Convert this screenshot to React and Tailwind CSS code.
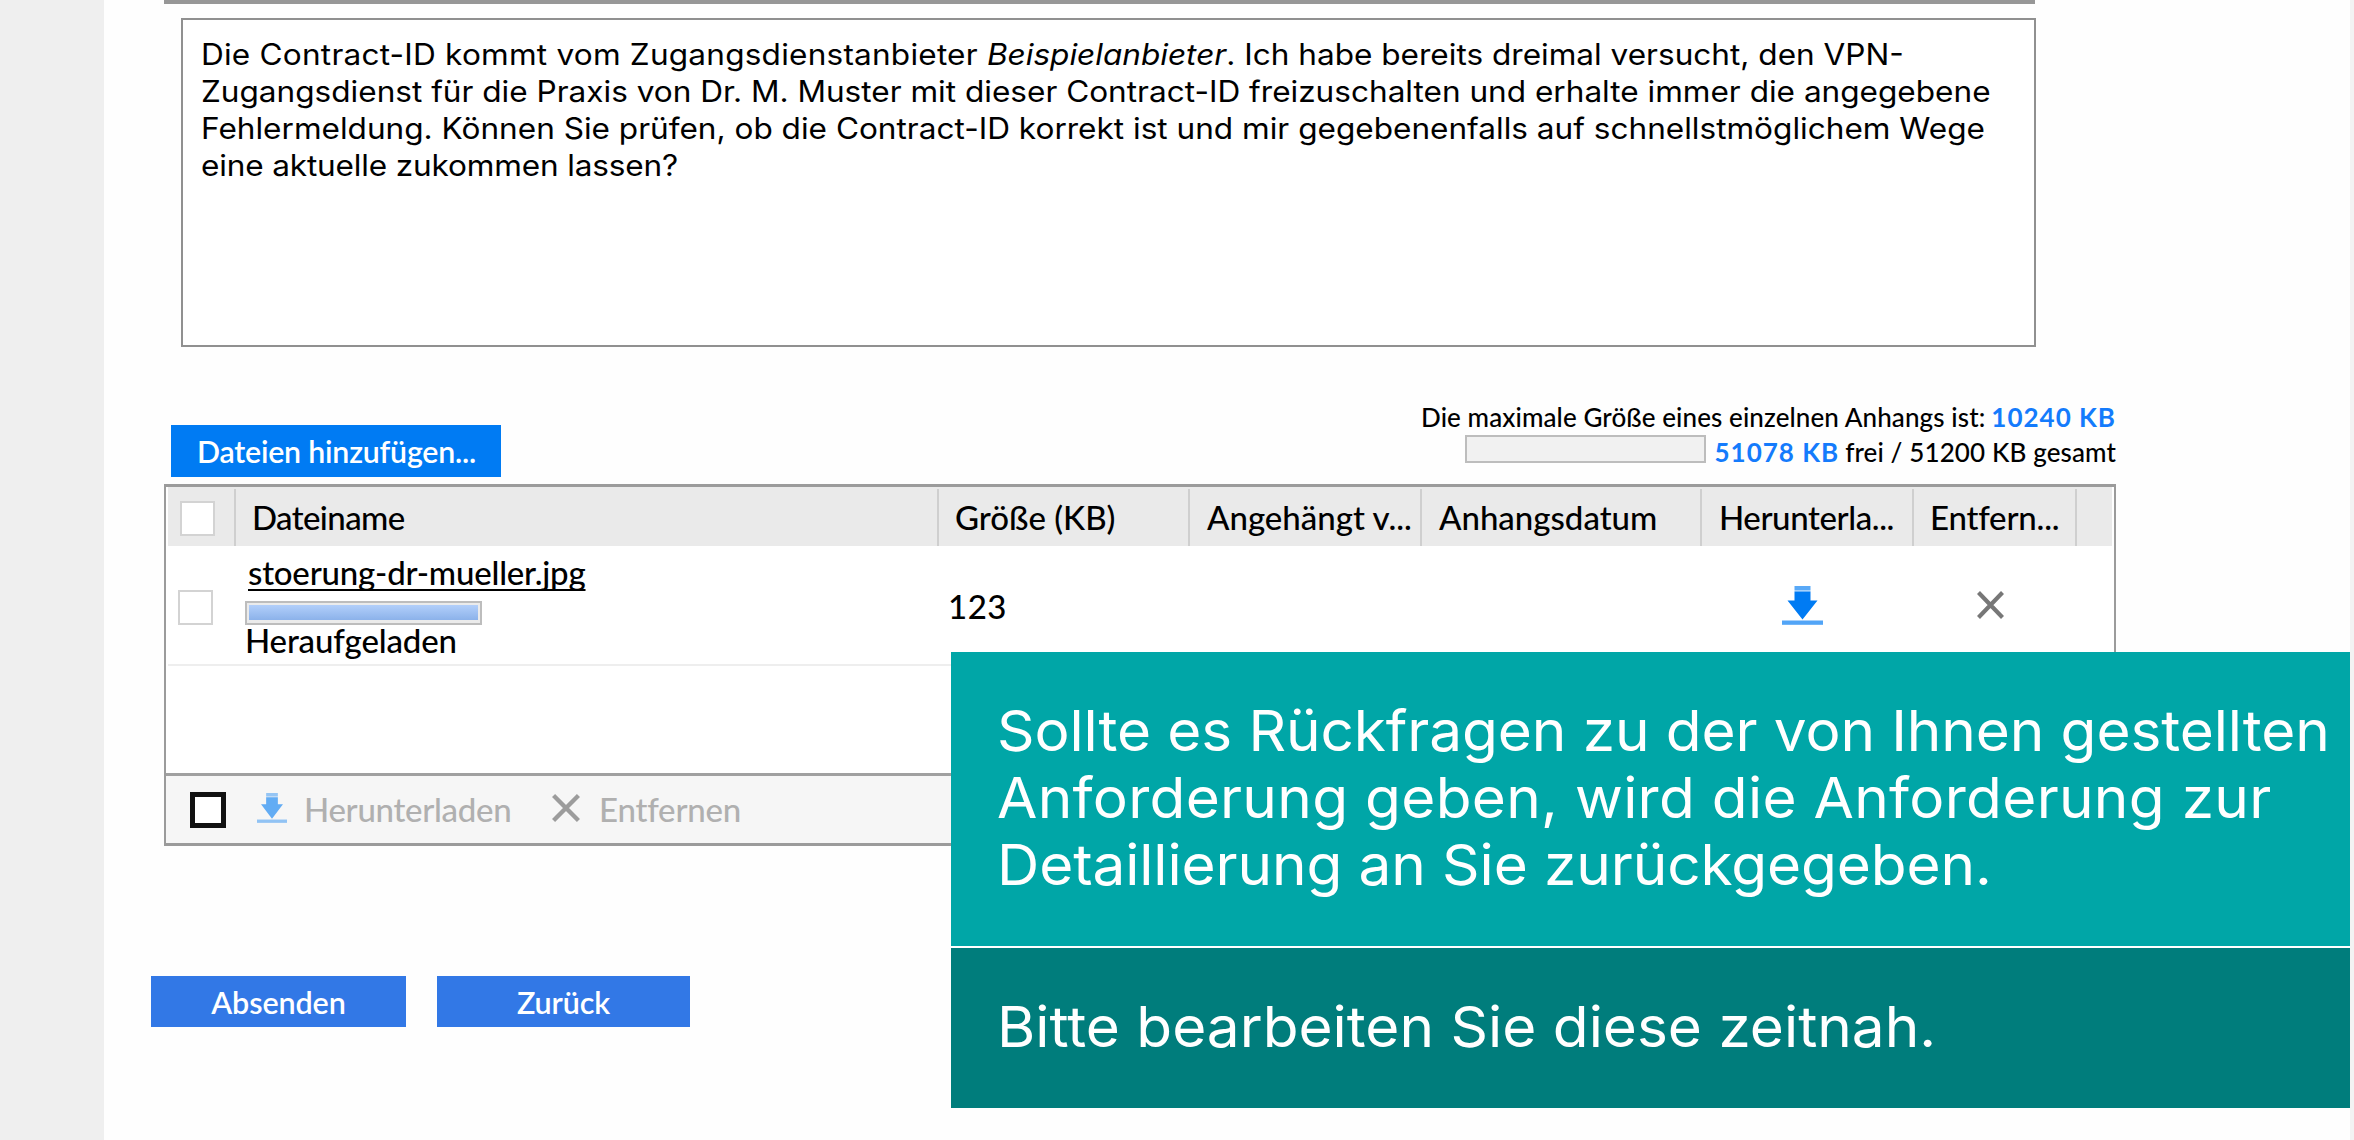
import React from "react";

const columns = [
  { label: "Dateiname", cls: "pl-4 tracking-[-0.6px]" },
  { label: "Größe (KB)", cls: "pl-4" },
  { label: "Angehängt v...", cls: "pl-[17px]" },
  { label: "Anhangsdatum", cls: "pl-[17px]" },
  { label: "Herunterla...", cls: "pl-[17px] tracking-[-0.4px]" },
  { label: "Entfern...", cls: "pl-4 tracking-[-0.2px]" },
  { label: "", cls: "" },
];

const gridCols = "grid grid-cols-[66px_703px_251px_232px_280px_212px_163px_37px]";

function DownloadIcon({ className }) {
  return (
    <svg viewBox="0 0 41 39" preserveAspectRatio="none" className={className}>
      <rect x="12.5" y="0" width="16" height="4" fill="#007bf3" opacity="0.65" />
      <rect x="12.5" y="4" width="16" height="1.5" fill="#007bf3" opacity="0.35" />
      <path d="M12.5 5.5h16V14.500h7L20.500 33.500 5.500 14.500h7z" fill="#007bf3" />
      <rect x="0" y="34.500" width="41" height="4.300" fill="#007bf3" opacity="0.68" />
    </svg>
  );
}

function CrossIcon({ className }) {
  return (
    <svg viewBox="0 0 27 27" preserveAspectRatio="none" className={className}>
      <path d="M1.500 1.500 25.500 25.500M25.500 1.500 1.500 25.500" fill="none" stroke="currentColor" strokeWidth="4.200" />
    </svg>
  );
}

function Message() {
  return (
    <div className="mt-[14px] ml-[77px] h-[329px] w-[1855px] border-2 border-[#909090] bg-white pt-4 pl-[18px] font-['Inter',sans-serif] text-[29.5px] leading-[37px] whitespace-nowrap text-black">
      <div className="w-[1700px] origin-left scale-x-[1.07]">
        <p>
          <span className="tracking-[0.2px]">Die Contract-ID kommt vom Zugangsdienstanbieter </span>
          <em>Beispielanbieter</em>. Ich habe bereits dreimal versucht, den VPN-
        </p>
        <p>
          Zugangsdienst für die Praxis von Dr. M. Muster mit dieser Contract-ID freizuschalten und erhalte immer die angegebene
        </p>
        <p>
          Fehlermeldung. Können Sie prüfen, ob die Contract-ID korrekt ist und mir gegebenenfalls auf schnellstmöglichem Wege
        </p>
        <p className="tracking-[-0.15px]">eine aktuelle zukommen lassen?</p>
      </div>
    </div>
  );
}

function Attachments() {
  return (
    <section className="ml-[60px] w-[1952px] font-medium text-black">
      <div className="flex h-[137px] items-start justify-between">
        <button className="mt-[78px] ml-[7px] h-[52px] w-[330px] bg-[#007bf3] pl-[26px] text-left text-[30.3px] leading-[50px] font-semibold tracking-[-0.2px] whitespace-nowrap text-white">
          Dateien hinzufügen...
        </button>
        <div className="mt-[53px] flex flex-col items-end text-[26px] leading-[35px] whitespace-nowrap">
          <div className="flex gap-[6px]">
            <span className="tracking-[0.1px]">Die maximale Größe eines einzelnen Anhangs ist:</span>
            <b className="tracking-[1px] text-[#147bfc]">10240 KB</b>
          </div>
          <div className="flex">
            <span className="mr-[8px] h-[28px] w-[241px] border-2 border-[#bdbdbd] bg-[#f1f1f1]" />
            <b className="mr-[6px] tracking-[1px] text-[#147bfc]">51078 KB</b>
            <span className="tracking-[0.12px]">frei / 51200 KB gesamt</span>
          </div>
        </div>
      </div>

      <div className="flex h-[362px] flex-col border-x-2 border-y-[3px] border-[#9b9b9b] bg-white text-[33px] leading-10">
        <div className={`${gridCols} mx-[2px] h-[59px] shrink-0 bg-[#eaeaea]`}>
          <div className="pt-[14px] pl-[12px]">
            <div className="h-[35px] w-[35px] border-2 border-[#d3d3d3] bg-white" />
          </div>
          {columns.map((c, i) => (
            <div key={i} className="mt-[2px] border-l-2 border-[#cfcfcf] pt-2 whitespace-nowrap">
              <span className={c.cls}>{c.label}</span>
            </div>
          ))}
        </div>

        <div className={`${gridCols} mx-[2px] h-[120px] shrink-0 border-b-2 border-[#eeeeee]`}>
          <div className="pt-[44px] pl-[10px]">
            <div className="h-[35px] w-[35px] border-2 border-[#d3d3d3] bg-white" />
          </div>
          <div className="pt-[6px] pl-[10px] whitespace-nowrap">
            <div className="pl-[4px] tracking-[-0.2px]">
              <span className="underline decoration-2 underline-offset-[4px] [text-decoration-skip-ink:none]">stoerung-dr-mueller.jpg</span>
            </div>
            <div className="mt-[9px] ml-px h-6 w-[237px] border-2 border-[#bdbdbd] bg-[#ebebeb] p-[2px] pb-[3px]">
              <div className="h-full bg-linear-to-b from-[#b2cffa] to-[#8cb2ea]" />
            </div>
            <div className="pl-px leading-[31px] tracking-[-0.15px]">Heraufgeladen</div>
          </div>
          <div className="pt-[40px] pl-[11px] tracking-[0.5px]">123</div>
          <div />
          <div />
          <div className="pt-[40px] pl-[82px]">
            <DownloadIcon className="h-[39px] w-[41px]" />
          </div>
          <div className="pt-[45px] pl-[65px]">
            <CrossIcon className="h-[28px] w-[27px] text-[#777777]" />
          </div>
        </div>

        <div className="grow" />

        <div className="flex h-[70px] shrink-0 items-start border-t-[3px] border-[#a0a0a0] bg-[#f6f6f6] whitespace-nowrap text-[#b0b0b0]">
          <div className="mt-[16px] ml-[24px] h-[36px] w-[36px] border-[5px] border-[#111111] bg-white" />
          <DownloadIcon className="mt-[17px] ml-[31px] h-[30px] w-[30px] opacity-60" />
          <span className="mt-[13px] ml-[17px] w-[220px] tracking-[-0.3px]">Herunterladen</span>
          <CrossIcon className="mt-[18px] ml-[28px] h-[28px] w-[28px] text-[#9c9c9c]" />
          <span className="mt-[13px] ml-[19px] tracking-[-0.2px]">Entfernen</span>
        </div>
      </div>
    </section>
  );
}

export default function App() {
  return (
    <div className="relative flex h-[1140px] w-[2354px] overflow-hidden bg-[#fefefe] font-['Lato',sans-serif]">
      <aside className="w-[104px] shrink-0 bg-[#efefef]" />
      <main className="flex grow flex-col items-start">
        <div className="ml-[60px] h-1 w-[1871px] shrink-0 bg-[#979797]" />
        <Message />
        <Attachments />
        <div className="mt-[130px] ml-[47px] flex gap-[31px] text-[30.5px] leading-[50px] font-semibold tracking-[-0.1px] text-white">
          <button className="h-[51px] w-[255px] bg-[#3278e6]">Absenden</button>
          <button className="h-[51px] w-[253px] bg-[#3278e6]">Zurück</button>
        </div>
      </main>
      <div className="w-1 shrink-0 bg-[#f3f3f3]" />

      <div className="absolute top-[652px] left-[951px] flex w-[1399px] flex-col gap-[2px] bg-white font-['Inter',sans-serif] text-[56px] leading-[67px] whitespace-nowrap text-white">
        <div className="h-[294px] bg-[#00a6a7] pt-[46px] pl-[46px]">
          <div className="w-[1280px] origin-left scale-x-[1.045]">
            <p className="tracking-[-0.1px]">Sollte es Rückfragen zu der von Ihnen gestellten</p>
            <p className="tracking-[0.28px]">Anforderung geben, wird die Anforderung zur</p>
            <p className="tracking-[-0.1px]">Detaillierung an Sie zurückgegeben.</p>
          </div>
        </div>
        <div className="h-[160px] bg-[#007d7c] pt-[46px] pl-[46px]">
          <p className="w-[1280px] origin-left scale-x-[1.045]">Bitte bearbeiten Sie diese zeitnah.</p>
        </div>
      </div>
    </div>
  );
}
